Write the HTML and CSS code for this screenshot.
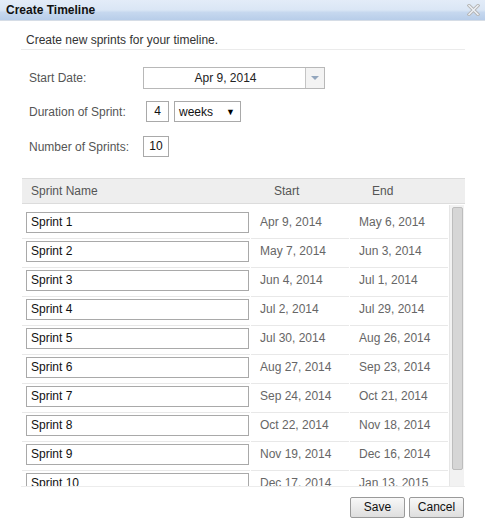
FILE: index.html
```html
<!DOCTYPE html>
<html>
<head>
<meta charset="utf-8">
<link rel="stylesheet" href="styles.css">
</head>
<body>
<div class="dialog">
  <div class="titlebar">
    <span class="title">Create Timeline</span>
    <svg class="close" width="13" height="12" viewBox="0 0 13 12">
      <path d="M2 1.5 L11 10.5 M11 1.5 L2 10.5" stroke="#b4b4b4" stroke-width="3.2" stroke-linecap="square"/>
      <path d="M2 1.5 L11 10.5 M11 1.5 L2 10.5" stroke="#eef2f7" stroke-width="1.4" stroke-linecap="square"/>
    </svg>
  </div>
  <div class="content">
    <div class="intro">Create new sprints for your timeline.</div>
    <div class="form">
      <div class="frow r1">
        <span class="label">Start Date:</span>
        <div class="datefield">
          <span class="dateval">Apr 9, 2014</span>
          <span class="datebtn"><svg width="8" height="4" viewBox="0 0 8 4"><path d="M0 0 L8 0 L4 4 Z" fill="#93a6bd"/></svg></span>
        </div>
      </div>
      <div class="frow r2">
        <span class="label">Duration of Sprint:</span>
        <div class="fields">
          <span class="numbox small">4</span>
          <span class="select">weeks<span class="caret">&#9660;</span></span>
        </div>
      </div>
      <div class="frow r3">
        <span class="label">Number of Sprints:</span>
        <span class="numbox">10</span>
      </div>
    </div>
    <div class="grid">
      <div class="ghead">
        <span class="h-name">Sprint Name</span>
        <span class="h-start">Start</span>
        <span class="h-end">End</span>
      </div>
      <div class="gbody">
        <div class="rows">
          <div class="row"><div class="c-name"><span class="namebox">Sprint 1</span></div><div class="c-date">Apr 9, 2014</div><div class="c-date">May 6, 2014</div></div>
          <div class="row"><div class="c-name"><span class="namebox">Sprint 2</span></div><div class="c-date">May 7, 2014</div><div class="c-date">Jun 3, 2014</div></div>
          <div class="row"><div class="c-name"><span class="namebox">Sprint 3</span></div><div class="c-date">Jun 4, 2014</div><div class="c-date">Jul 1, 2014</div></div>
          <div class="row"><div class="c-name"><span class="namebox">Sprint 4</span></div><div class="c-date">Jul 2, 2014</div><div class="c-date">Jul 29, 2014</div></div>
          <div class="row"><div class="c-name"><span class="namebox">Sprint 5</span></div><div class="c-date">Jul 30, 2014</div><div class="c-date">Aug 26, 2014</div></div>
          <div class="row"><div class="c-name"><span class="namebox">Sprint 6</span></div><div class="c-date">Aug 27, 2014</div><div class="c-date">Sep 23, 2014</div></div>
          <div class="row"><div class="c-name"><span class="namebox">Sprint 7</span></div><div class="c-date">Sep 24, 2014</div><div class="c-date">Oct 21, 2014</div></div>
          <div class="row"><div class="c-name"><span class="namebox">Sprint 8</span></div><div class="c-date">Oct 22, 2014</div><div class="c-date">Nov 18, 2014</div></div>
          <div class="row"><div class="c-name"><span class="namebox">Sprint 9</span></div><div class="c-date">Nov 19, 2014</div><div class="c-date">Dec 16, 2014</div></div>
          <div class="row"><div class="c-name"><span class="namebox">Sprint 10</span></div><div class="c-date">Dec 17, 2014</div><div class="c-date">Jan 13, 2015</div></div>
        </div>
        <div class="scrolltrack"><div class="thumb"></div></div>
      </div>
    </div>
    <div class="footer">
      <span class="btn save">Save</span>
      <span class="btn cancel">Cancel</span>
    </div>
  </div>
</div>
</body>
</html>
```
FILE: styles.css
```css
* { box-sizing: border-box; }
html, body { margin: 0; padding: 0; background: #fff; }
body {
  width: 485px;
  height: 527px;
  font-family: "Liberation Sans", Arial, sans-serif;
  font-size: 12px;
  color: #333;
  overflow: hidden;
}
.dialog { width: 485px; height: 527px; }
.titlebar {
  height: 21px;
  display: flex;
  align-items: center;
  justify-content: space-between;
  padding: 0 5px 1px 6px;
  background: linear-gradient(to bottom, #e3ecf8 0%, #dae6f5 50%, #c6d8ef 62%, #b8cde9 100%);
  border-bottom: 1px solid #d6dde6;
}
.title { font-weight: bold; font-size: 12px; color: #111; }
.close { display: block; margin-top: 1px; }
.content { padding: 0 20px 0 21px; }
.intro {
  padding: 12px 0 1px 5px;
  line-height: 15px;
  color: #333;
  border-bottom: 1px solid #ebebeb;
}
.form { padding-left: 8px; margin-top: 17px; }
.frow { display: flex; align-items: center; }
.label { width: 114px; color: #555; }
.r1 { height: 22px; }
.r2 { height: 21px; margin-top: 12px; }
.r3 { height: 21px; margin-top: 14px; }
.datefield {
  width: 182px;
  height: 22px;
  border: 1px solid #b8b8b8;
  display: flex;
}
.dateval { flex: 1; text-align: center; line-height: 20px; color: #222; padding-left: 2px; }
.datebtn {
  width: 19px;
  border-left: 1px solid #c4c4c4;
  background: #f3f3f3;
  display: flex;
  align-items: center;
  justify-content: center;
}
.fields { display: flex; gap: 5px; }
.numbox {
  display: block;
  width: 26px;
  height: 21px;
  border: 1px solid #a9a9a9;
  text-align: center;
  line-height: 19px;
  color: #111;
}
.numbox.small { width: 23px; margin-left: 3px; }
.select {
  display: flex;
  justify-content: space-between;
  align-items: center;
  width: 67px;
  height: 21px;
  border: 1px solid #a9a9a9;
  padding: 0 5px 0 4px;
  color: #111;
}
.caret { font-size: 9px; color: #000; }
.grid { margin-top: 21px; margin-left: 1px; width: 443px; }
.ghead {
  display: grid;
  grid-template-columns: 228px 99px 116px;
  height: 26px;
  background: #eeeeee;
  border-top: 1px solid #dcdcdc;
  border-bottom: 1px solid #dcdcdc;
  align-items: center;
  color: #555;
}
.h-name { padding-left: 9px; }
.h-start { padding-left: 24px; }
.h-end { padding-left: 23px; }
.gbody {
  display: flex;
  height: 283px;
  overflow: hidden;
  border-bottom: 1px solid #ececec;
  margin-left: -1px;
  padding-left: 1px;
}
.rows { width: 426px; padding-top: 4px; }
.row {
  display: grid;
  grid-template-columns: 228px 98px 98px;
  column-gap: 1px;
  height: 29px;
}
.row > div { border-bottom: 1px solid #e8e8e8; }
.c-name { padding: 4px 0 0 4px; }
.namebox {
  display: block;
  width: 223px;
  height: 21px;
  border: 1px solid #a9a9a9;
  padding-left: 4px;
  line-height: 19px;
  color: #111;
}
.c-date { padding-left: 9px; line-height: 29px; color: #666; padding-bottom: 2px; line-height: 27px; padding-top: 1px; }
.scrolltrack {
  margin-left: 1px;
  margin-top: 1px;
  width: 15px;
  height: 290px;
  background: #f2f2f2;
  border-left: 1px solid #e6e6e6;
  padding: 2px 0 0 2px;
}
.thumb {
  width: 11px;
  height: 263px;
  background: #d6d6d6;
  border: 1px solid #bdbdbd;
  border-radius: 2px;
}
.footer {
  display: flex;
  justify-content: flex-end;
  gap: 4px;
  margin-top: 10px;
  padding-right: 1px;
}
.btn {
  display: block;
  height: 21px;
  line-height: 19px;
  text-align: center;
  border: 1px solid #9a9a9a;
  border-radius: 2px;
  background: linear-gradient(to bottom, #f8f8f8, #dedede);
  color: #111;
}
.save { width: 55px; }
.cancel { width: 55px; }
```
